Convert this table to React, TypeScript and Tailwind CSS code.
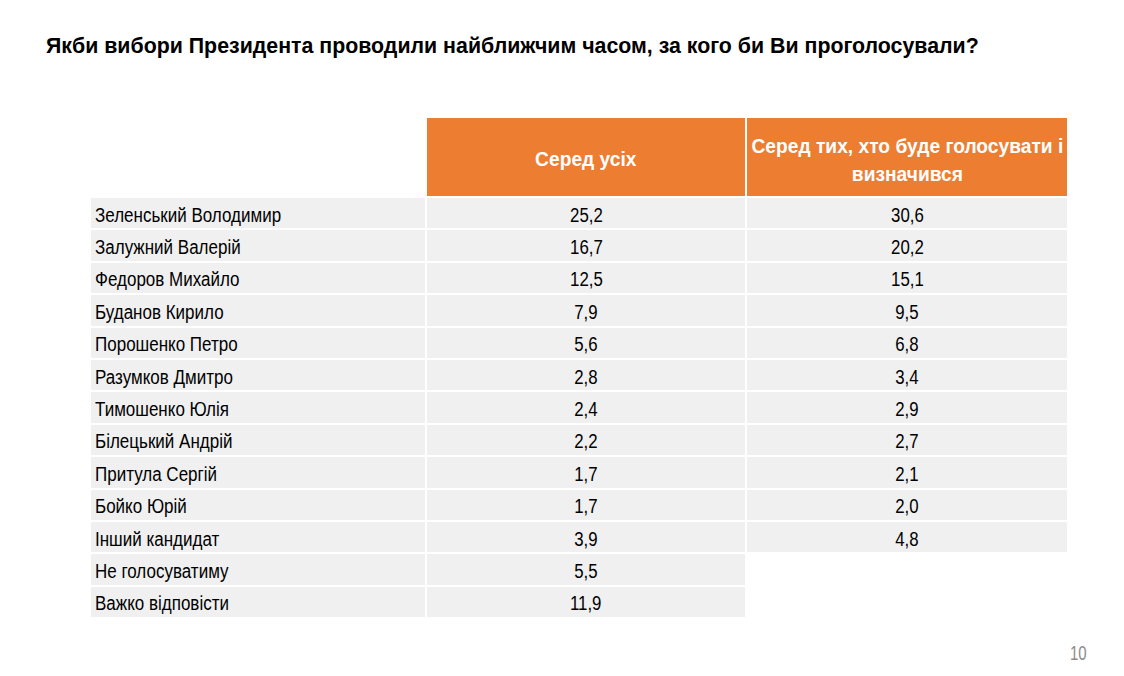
import React from "react";

const rows: [string, string, string][] = [
  ["Зеленський Володимир", "25,2", "30,6"],
  ["Залужний Валерій", "16,7", "20,2"],
  ["Федоров Михайло", "12,5", "15,1"],
  ["Буданов Кирило", "7,9", "9,5"],
  ["Порошенко Петро", "5,6", "6,8"],
  ["Разумков Дмитро", "2,8", "3,4"],
  ["Тимошенко Юлія", "2,4", "2,9"],
  ["Білецький Андрій", "2,2", "2,7"],
  ["Притула Сергій", "1,7", "2,1"],
  ["Бойко Юрій", "1,7", "2,0"],
  ["Інший кандидат", "3,9", "4,8"],
  ["Не голосуватиму", "5,5", ""],
  ["Важко відповісти", "11,9", ""],
];

export default function App() {
  return (
    <div
      className="w-[1124px] h-[676px] bg-white relative overflow-hidden text-black"
      style={{ fontFamily: '"Liberation Sans", Arial, sans-serif' }}
    >
      <div className="pt-[33px] pl-[46px] h-[58px] text-[22px] font-bold leading-[26px] whitespace-nowrap">
        <span className="inline-block origin-left scale-x-[0.97]">
          Якби вибори Президента проводили найближчим часом, за кого би Ви проголосували?
        </span>
      </div>
      <div className="mt-[60px] ml-[91px] grid grid-cols-[334px_318px_320px] gap-x-[2px] gap-y-[2px]">
        <div className="h-[78px]" />
        <div className="h-[78px] pt-[4px] bg-[#ed7d31] text-white font-bold text-[20px] flex items-center justify-center text-center leading-[28px] whitespace-nowrap">
          <span className="inline-block scale-x-[0.96]">Серед усіх</span>
        </div>
        <div className="h-[78px] pt-[6px] bg-[#ed7d31] text-white font-bold text-[20px] flex items-center justify-center text-center leading-[28px] whitespace-nowrap">
          <span className="inline-block scale-x-[0.96]">
            Серед тих, хто буде голосувати і
            <br />
            визначився
          </span>
        </div>
        {rows.map(([name, a, b]) => (
          <React.Fragment key={name}>
            <div className="h-[30.4px] pt-[3px] bg-[#f0f0f0] flex items-center pl-[4px] text-[20px] whitespace-nowrap">
              <span className="inline-block origin-left scale-x-[0.85]">{name}</span>
            </div>
            <div className="h-[30.4px] pt-[3px] bg-[#f0f0f0] flex items-center justify-center text-[20px]">
              <span className="inline-block scale-x-[0.84]">{a}</span>
            </div>
            <div
              className={`h-[30.4px] pt-[3px] flex items-center justify-center text-[20px] ${
                b ? "bg-[#f0f0f0]" : "bg-white"
              }`}
            >
              <span className="inline-block scale-x-[0.84]">{b}</span>
            </div>
          </React.Fragment>
        ))}
      </div>
      <div className="absolute left-[1070px] top-[643px] text-[20px] leading-[20px] text-[#8c8c8c]">
        <span className="inline-block origin-left scale-x-[0.75]">10</span>
      </div>
    </div>
  );
}
